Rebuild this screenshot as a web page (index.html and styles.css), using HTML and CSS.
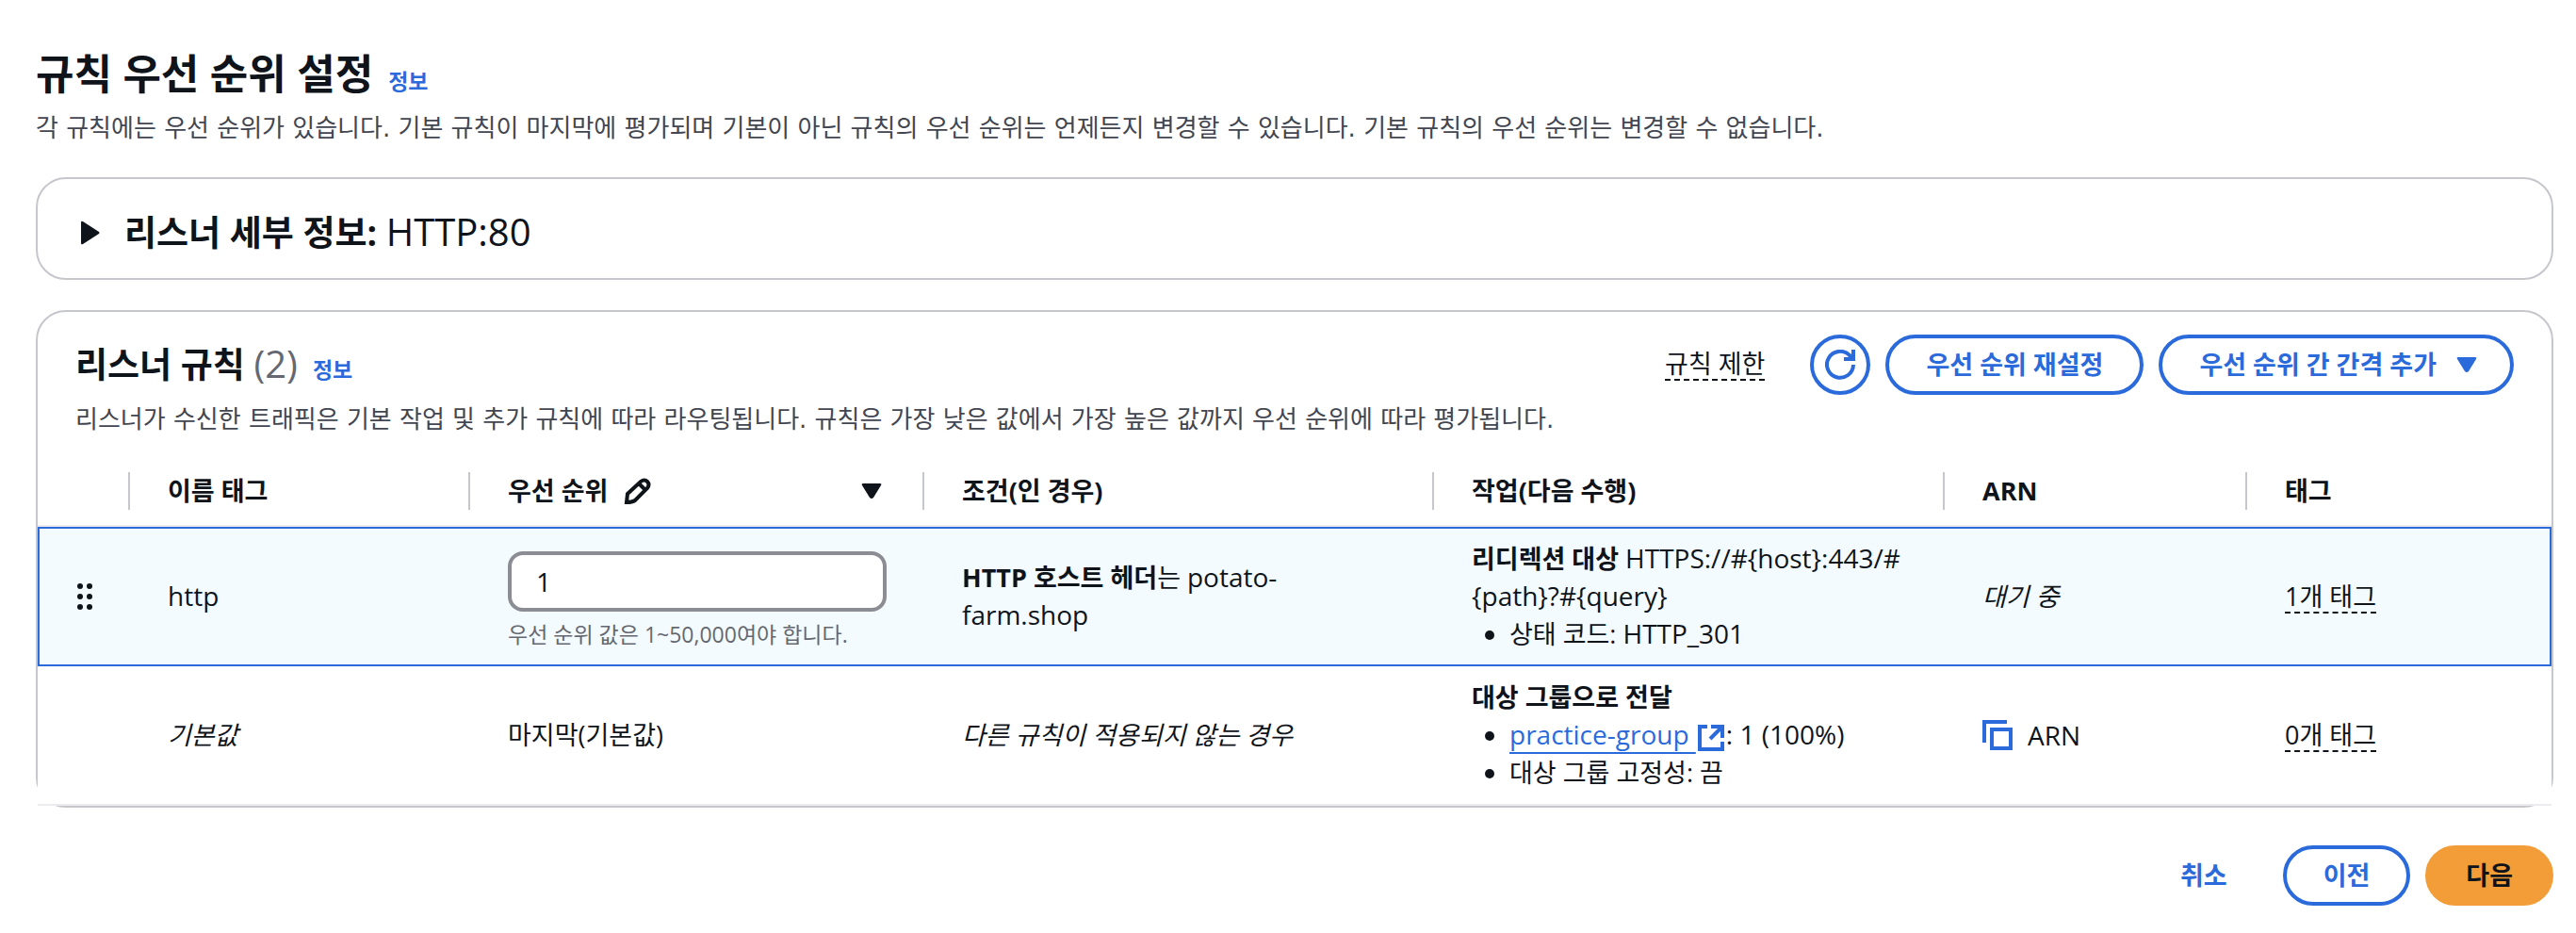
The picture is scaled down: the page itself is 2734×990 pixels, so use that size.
FILE: index.html
```html
<!DOCTYPE html>
<html lang="ko">
<head>
    <meta charset="UTF-8">
    <meta name="viewport" content="width=device-width, initial-scale=1.0">
    <title>규칙 우선 순위 설정</title>
    <link rel="stylesheet" href="styles.css">
</head>
<body>
    <main class="page">
        <header class="page-header">
            <div class="title-row">
                <h1>규칙 우선 순위 설정</h1>
                <a class="info" href="#">정보</a>
            </div>
            <p class="description">각 규칙에는 우선 순위가 있습니다. 기본 규칙이 마지막에 평가되며 기본이 아닌 규칙의 우선 순위는 언제든지 변경할 수 있습니다. 기본 규칙의 우선 순위는 변경할 수 없습니다.</p>
        </header>

        <section class="card listener">
            <button class="expand" type="button" aria-expanded="false">
                <svg class="caret" viewBox="0 0 32 32" aria-hidden="true"><path d="M8 5v22q0 2 2 1l17-11q1-1 0-2L10 4q-2-1-2 1z"/></svg>
                <span class="expand-title"><b>리스너 세부 정보:</b> <span class="latin-lg">HTTP:80</span></span>
            </button>
        </section>

        <section class="card rules">
            <div class="rules-header">
                <div class="title-row">
                    <h2>리스너 규칙 <span class="count">(2)</span></h2>
                    <a class="info" href="#">정보</a>
                </div>
                <div class="actions">
                    <button class="dashed" type="button">규칙 제한</button>
                    <button class="btn btn-icon" type="button" aria-label="새로 고침">
                        <svg class="icon" viewBox="0 0 32 32" aria-hidden="true"><path d="M30 16a14 14 0 1 1-4-10l4 4M30 0v10H20"/></svg>
                    </button>
                    <button class="btn" type="button">우선 순위 재설정</button>
                    <button class="btn btn-menu" type="button">우선 순위 간 간격 추가
                        <svg class="arrow" viewBox="0 0 32 32" aria-hidden="true"><path d="M7 8h18q2 0 1 2l-8 13q-2 2-4 0L6 10q-1-2 1-2z"/></svg>
                    </button>
                </div>
            </div>
            <p class="description">리스너가 수신한 트래픽은 기본 작업 및 추가 규칙에 따라 라우팅됩니다. 규칙은 가장 낮은 값에서 가장 높은 값까지 우선 순위에 따라 평가됩니다.</p>

            <table>
                <colgroup>
                    <col class="col-drag">
                    <col class="col-name">
                    <col class="col-priority">
                    <col class="col-condition">
                    <col class="col-action">
                    <col class="col-arn">
                    <col class="col-tags">
                </colgroup>
                <thead>
                    <tr>
                        <th><div class="th"></div></th>
                        <th><div class="th">이름 태그</div></th>
                        <th>
                            <div class="th">
                                우선 순위
                                <svg class="icon pencil" viewBox="0 0 32 32" aria-hidden="true"><path d="M4 28l1-9L19 6q4-3 7 0t0 7L13 26q-3 2-9 2zM17 8l7 7"/></svg>
                                <svg class="arrow sort" viewBox="0 0 32 32" aria-hidden="true"><path d="M7 8h18q2 0 1 2l-8 13q-2 2-4 0L6 10q-1-2 1-2z"/></svg>
                            </div>
                        </th>
                        <th><div class="th">조건(인 경우)</div></th>
                        <th><div class="th">작업(다음 수행)</div></th>
                        <th><div class="th">ARN</div></th>
                        <th><div class="th">태그</div></th>
                    </tr>
                </thead>
                <tbody>
                    <tr class="selected">
                        <td>
                            <svg class="drag" viewBox="0 0 32 32" aria-hidden="true"><circle cx="11" cy="5" r="3"/><circle cx="21" cy="5" r="3"/><circle cx="11" cy="16" r="3"/><circle cx="21" cy="16" r="3"/><circle cx="11" cy="27" r="3"/><circle cx="21" cy="27" r="3"/></svg>
                        </td>
                        <td><span class="latin">http</span></td>
                        <td class="cell-input">
                            <input id="priority" type="text" value="1" aria-label="우선 순위" aria-describedby="priority-hint">
                            <div class="hint" id="priority-hint">우선 순위 값은 1~50,000여야 합니다.</div>
                        </td>
                        <td><b>HTTP 호스트 헤더</b>는 <span class="latin">potato-farm.shop</span></td>
                        <td>
                            <b>리디렉션 대상</b> <span class="latin">HTTPS://#{host}:443/#<wbr>{path}?#{query}</span>
                            <ul>
                                <li>상태 코드: <span class="latin">HTTP_301</span></li>
                            </ul>
                        </td>
                        <td><em>대기 중</em></td>
                        <td><button class="dashed" type="button">1개 태그</button></td>
                    </tr>
                    <tr>
                        <td></td>
                        <td><em>기본값</em></td>
                        <td>마지막(기본값)</td>
                        <td><em>다른 규칙이 적용되지 않는 경우</em></td>
                        <td>
                            <b>대상 그룹으로 전달</b>
                            <ul>
                                <li><span class="latin"><a class="link" href="#">practice-group <svg class="icon external" viewBox="0 0 32 32" aria-hidden="true"><path d="M12 4H4v24h24v-8M16 4h12v12M28 4L15 17"/></svg></a>: 1 (100%)</span></li>
                                <li>대상 그룹 고정성: 끔</li>
                            </ul>
                        </td>
                        <td>
                            <div class="arn">
                                <button class="copy" type="button" aria-label="복사"><svg class="icon" viewBox="0 0 32 32" aria-hidden="true"><path d="M2 24V2h24M10 10h20v20H10z"/></svg></button>
                                <span class="latin">ARN</span>
                            </div>
                        </td>
                        <td><button class="dashed" type="button">0개 태그</button></td>
                    </tr>
                </tbody>
            </table>
        </section>

        <footer class="footer">
            <button class="btn btn-link" type="button">취소</button>
            <button class="btn" type="button">이전</button>
            <button class="btn btn-primary" type="button">다음</button>
        </footer>
    </main>
</body>
</html>
```

FILE: styles.css
```css
* {
    box-sizing: border-box;
}

body {
    margin: 0;
    background-color: #fff;
    color: #0f141a;
    font-family: "Open Sans", "Noto Sans CJK KR", sans-serif;
    font-size: 27px;
    line-height: 40px;
}

button, input {
    font: inherit;
    color: inherit;
}

button {
    padding: 0;
    border: none;
    background: none;
    cursor: pointer;
}

h1, h2, p, ul {
    margin: 0;
}

svg {
    flex: none;
    width: 32px;
    height: 32px;
}

.page {
    padding: 50px 24px 28px 38px;
}

.title-row {
    display: flex;
    align-items: baseline;
    gap: 16px;
}

h1 {
    font-size: 44px;
    line-height: 56px;
}

h2 {
    font-size: 37px;
    line-height: 48px;
}

.count {
    color: #656871;
    font-size: 40px;
    font-weight: 400;
}

.info {
    color: #2b6adb;
    font-size: 23px;
    font-weight: 600;
    text-decoration: none;
}

.description {
    color: #424650;
    font-family: "DejaVu Sans", "Noto Sans CJK KR", sans-serif;
    font-size: 26px;
}

.page-header .description {
    padding-top: 10px;
}

.latin {
    font-size: 28px;
    line-height: 32px;
}

.latin-lg {
    font-size: 40px;
}

.icon {
    fill: none;
    stroke: currentColor;
    stroke-width: 4;
}

/* Cards */
.card {
    border: 2px solid #c6c6cd;
    border-radius: 32px;
    background-color: #fff;
}

.listener {
    margin-top: 32px;
    padding: 32px 38px 24px;
}

.expand {
    display: flex;
    align-items: center;
    gap: 22px;
}

.expand-title {
    font-size: 37px;
    line-height: 48px;
}

.caret, .arrow {
    fill: currentColor;
}

.rules {
    margin-top: 32px;
    padding-top: 24px;
}

.rules-header {
    display: flex;
    align-items: center;
    justify-content: space-between;
    padding: 0 40px;
}

.rules > .description {
    padding: 6px 40px 0;
}

.actions {
    display: flex;
    align-items: center;
    gap: 16px;
}

.dashed {
    border-bottom: 2px dashed #0f141a;
    line-height: 32px;
}

.actions .dashed {
    margin-right: 32px;
}

/* Buttons */
.btn {
    display: flex;
    align-items: center;
    justify-content: center;
    gap: 16px;
    height: 64px;
    padding: 0 39px;
    border: 4px solid #2b6adb;
    border-radius: 40px;
    color: #2b6adb;
    font-weight: 700;
}

.btn-icon {
    width: 64px;
    padding: 0;
}

.btn-menu {
    padding-right: 30px;
}

.btn-link {
    border-color: transparent;
}

.btn-primary {
    border-color: #f29d38;
    background-color: #f29d38;
    color: #0f141a;
}

/* Rules table */
table {
    width: 100%;
    margin-top: 20px;
    table-layout: fixed;
    border-collapse: separate;
    border-spacing: 0;
}

.col-drag { width: 98px; }
.col-name { width: 361px; }
.col-priority { width: 482px; }
.col-condition { width: 541px; }
.col-action { width: 542px; }
.col-arn { width: 321px; }

th {
    padding: 16px 0;
    border-bottom: 2px solid #ebebf0;
    text-align: left;
}

.th {
    display: flex;
    align-items: center;
    gap: 16px;
    height: 40px;
    padding: 0 38px 0 40px;
    border-right: 2px solid #c6c6cd;
}

th:last-child .th {
    border-right: none;
}

.sort {
    margin-left: auto;
}

td {
    height: 148px;
    padding: 12px 40px;
    border-bottom: 2px solid #ebebf0;
    background-color: #fff;
}

.selected td {
    border-top: 2px solid #2b6adb;
    border-bottom-color: #2b6adb;
    background-color: #f3fbfe;
}

.selected td:first-child {
    padding: 0 32px;
    border-left: 2px solid #2b6adb;
}

.selected td:last-child {
    border-right: 2px solid #2b6adb;
}

.drag {
    display: block;
    fill: currentColor;
}

td ul {
    padding-left: 40px;
}

td.cell-input {
    padding-top: 20px;
}

input {
    display: block;
    width: 100%;
    height: 64px;
    padding: 0 26px;
    border: 4px solid #8c8c94;
    border-radius: 16px;
    background-color: #fff;
    font-size: 28px;
}

.hint {
    margin-top: 8px;
    color: #656871;
    font-size: 23px;
    line-height: 32px;
}

.link {
    color: #2b6adb;
    text-decoration-thickness: 2px;
    text-underline-offset: 8px;
}

.external {
    vertical-align: middle;
}

.arn {
    display: flex;
    align-items: center;
    gap: 16px;
}

.copy {
    display: flex;
    color: #2b6adb;
}

.footer {
    display: flex;
    justify-content: flex-end;
    gap: 16px;
    margin-top: 40px;
}
```
